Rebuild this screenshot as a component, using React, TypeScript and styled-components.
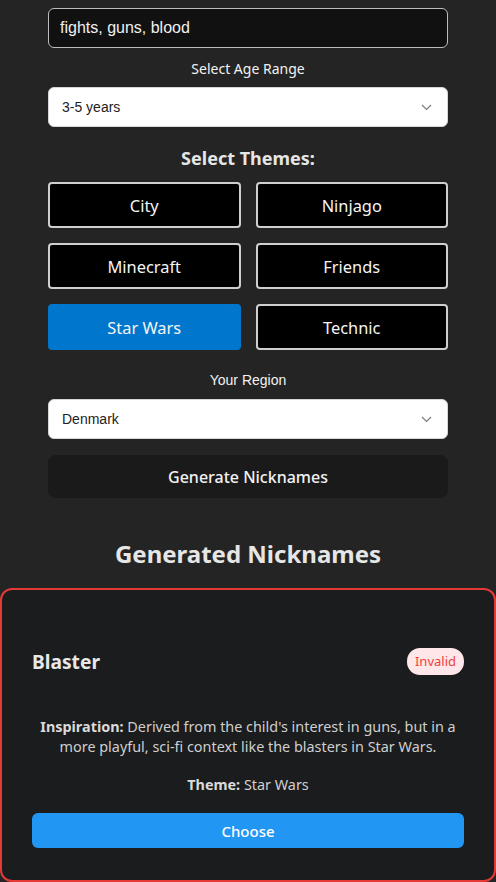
import { useState } from "react";
import styled, { createGlobalStyle } from "styled-components";

const GlobalStyle = createGlobalStyle`
  body {
    margin: 0;
    background-color: #242424;
    font-family: "Noto Sans", "Open Sans", sans-serif;
    color: #eeeeee;
  }
`;

const StyledPage = styled.div`
  width: 496px;
  padding-top: 8px;
`;

const StyledForm = styled.div`
  width: 400px;
  margin: 0 auto;
  display: flex;
  flex-direction: column;
`;

const StyledTextInput = styled.input`
  box-sizing: border-box;
  height: 40px;
  width: 100%;
  background-color: #111111;
  border: 1px solid #bdbdbd;
  border-radius: 6px;
  padding: 0 11px;
  font-family: "Liberation Sans", Arial, sans-serif;
  font-size: 16px;
  color: #f0f0f0;
  outline: none;
`;

const StyledLabel = styled.label<{ $sans?: boolean }>`
  display: block;
  text-align: center;
  font-family: ${p =>
    p.$sans ? '"Liberation Sans", Arial, sans-serif' : '"Noto Sans", sans-serif'};
  font-size: 14px;
  line-height: 19px;
  color: #f2f2f2;
  margin: ${p => (p.$sans ? "21px 0 9px" : "11px 0 9px")};
`;

const StyledSelectBox = styled.div`
  box-sizing: border-box;
  height: 40px;
  background-color: #ffffff;
  border-radius: 6px;
  border: 1px solid #d6d6d6;
  display: flex;
  align-items: center;
  justify-content: space-between;
  padding: 0 15px 0 13px;
  font-family: "Liberation Sans", Arial, sans-serif;
  font-size: 14px;
  color: #222222;
`;

const StyledThemesTitle = styled.h3`
  margin: 19px 0 12px;
  text-align: center;
  font-size: 18px;
  line-height: 24px;
  font-weight: 700;
  color: #e6e6e6;
`;

const StyledThemeGrid = styled.div`
  display: grid;
  grid-template-columns: 1fr 1fr;
  column-gap: 15px;
  row-gap: 15px;
`;

const StyledThemeButton = styled.button<{ $active: boolean }>`
  box-sizing: border-box;
  height: 46px;
  border-radius: 4px;
  border: 2px solid ${p => (p.$active ? "#0077cc" : "#cfcfcf")};
  background-color: ${p => (p.$active ? "#0077cc" : "#000000")};
  color: #f5f5f5;
  font-family: "Noto Sans", sans-serif;
  font-size: 16.4px;
  cursor: pointer;
`;

const StyledGenerateButton = styled.button`
  margin-top: 16px;
  height: 43px;
  border: none;
  border-radius: 8px;
  background-color: #1a1a1a;
  color: #f2f2f2;
  font-family: "Noto Sans", sans-serif;
  font-size: 16px;
  font-weight: 500;
  cursor: pointer;
`;

const StyledResultsTitle = styled.h2`
  margin: 40px 0 18px;
  text-align: center;
  font-size: 24px;
  line-height: 32px;
  font-weight: 700;
  color: #e6e6e6;
`;

const StyledCard = styled.div<{ $invalid: boolean }>`
  box-sizing: border-box;
  border: 2px solid ${p => (p.$invalid ? "#e53935" : "#444")};
  border-radius: 12px;
  background-color: #1b1c1e;
  padding: 58px 30px 30px;
  height: 294px;
`;

const StyledCardHeader = styled.div`
  display: flex;
  align-items: center;
  justify-content: space-between;
`;

const StyledNickname = styled.h3`
  margin: 0;
  font-size: 19.2px;
  font-weight: 700;
  color: #e8e8e8;
`;

const StyledBadge = styled.span`
  background-color: #ffe6e8;
  color: #f0413c;
  font-size: 13px;
  line-height: 19px;
  padding: 4px 8px;
  border-radius: 13px;
`;

const StyledDetail = styled.p<{ $top: number }>`
  margin: ${p => p.$top}px 0 0;
  text-align: center;
  font-size: 14.4px;
  line-height: 20px;
  color: #cfcfcf;

  strong {
    color: #dadada;
  }
`;

const StyledChooseButton = styled.button`
  width: 100%;
  margin-top: 18px;
  height: 35px;
  border: none;
  border-radius: 6px;
  background-color: #2196f3;
  color: #ffffff;
  font-family: "Noto Sans", sans-serif;
  font-size: 15px;
  font-weight: 500;
  cursor: pointer;
`;

const Chevron = () => (
  <svg width="11" height="7" viewBox="0 0 11 7" fill="none">
    <polyline points="1,1 5.5,5.5 10,1" stroke="#7a7a7a" strokeWidth="1.2" />
  </svg>
);

const themes = ["City", "Ninjago", "Minecraft", "Friends", "Star Wars", "Technic"];

export default function App() {
  const [selected, setSelected] = useState("Star Wars");
  return (
    <StyledPage>
      <GlobalStyle />
      <StyledForm>
        <StyledTextInput defaultValue="fights, guns, blood" />
        <StyledLabel>Select Age Range</StyledLabel>
        <StyledSelectBox>
          <span>3-5 years</span>
          <Chevron />
        </StyledSelectBox>
        <StyledThemesTitle>Select Themes:</StyledThemesTitle>
        <StyledThemeGrid>
          {themes.map(theme => (
            <StyledThemeButton
              key={theme}
              $active={theme === selected}
              onClick={() => setSelected(theme)}
            >
              {theme}
            </StyledThemeButton>
          ))}
        </StyledThemeGrid>
        <StyledLabel $sans>Your Region</StyledLabel>
        <StyledSelectBox>
          <span>Denmark</span>
          <Chevron />
        </StyledSelectBox>
        <StyledGenerateButton>Generate Nicknames</StyledGenerateButton>
      </StyledForm>
      <StyledResultsTitle>Generated Nicknames</StyledResultsTitle>
      <StyledCard $invalid>
        <StyledCardHeader>
          <StyledNickname>Blaster</StyledNickname>
          <StyledBadge>Invalid</StyledBadge>
        </StyledCardHeader>
        <StyledDetail $top={42}>
          <strong>Inspiration:</strong> Derived from the child's interest in guns, but in a
          more playful, sci-fi context like the blasters in Star Wars.
        </StyledDetail>
        <StyledDetail $top={18}>
          <strong>Theme:</strong> Star Wars
        </StyledDetail>
        <StyledChooseButton>Choose</StyledChooseButton>
      </StyledCard>
    </StyledPage>
  );
}
